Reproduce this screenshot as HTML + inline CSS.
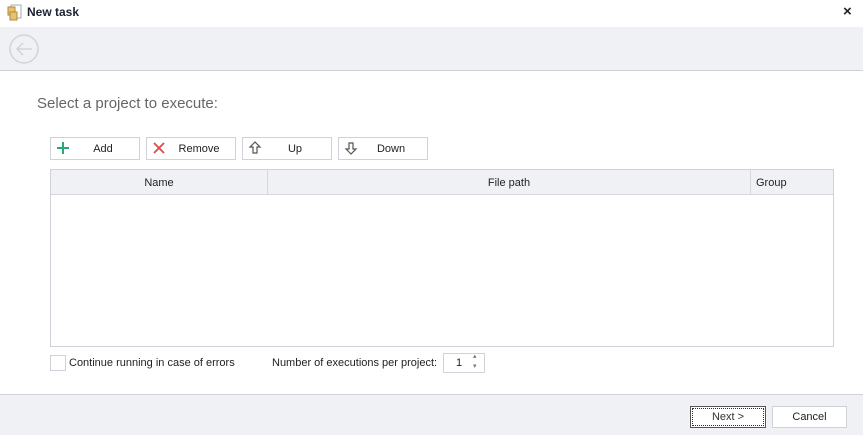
<!DOCTYPE html>
<html><head><style>
*{margin:0;padding:0;box-sizing:border-box}
body{width:863px;height:435px;position:relative;background:#fff;font-family:"Liberation Sans",sans-serif;font-size:11px;color:#222;overflow:hidden}
.a{position:absolute}
.btn{position:absolute;top:137px;width:90px;height:23px;border:1px solid #cfd2d8;background:#fff;text-align:center;line-height:23px;color:#222}
.btn span{position:absolute;left:0;right:0;top:0;padding-left:16px}
.ic{position:absolute;left:5px;top:3px}
</style></head><body>
<div class="a" style="left:0;top:0;width:863px;height:27px;background:#fff"></div>
<svg class="a" style="left:7px;top:4px" width="16" height="18" viewBox="0 0 16 18"><rect x="4" y="1" width="10" height="13" fill="#fff" stroke="#aaa"/><rect x="1" y="3" width="7" height="8" fill="#e8c070" stroke="#b08a3a"/><rect x="3" y="8" width="7" height="8" fill="#e8c070" stroke="#b08a3a"/></svg>
<div class="a" style="left:27px;top:5px;font-weight:bold;font-size:12px;color:#1a2233">New task</div>
<div class="a" style="left:843px;top:3px;font-size:15px;font-weight:bold;color:#222">×</div>
<div class="a" style="left:0;top:27px;width:863px;height:44px;background:#f0f1f5;border-bottom:1px solid #cfd1d6"></div>
<svg class="a" style="left:8px;top:33px" width="32" height="32" viewBox="0 0 32 32"><circle cx="16" cy="16" r="14" fill="none" stroke="#d2d4da" stroke-width="1.5"/><path d="M24 16H9M15 10l-6 6 6 6" fill="none" stroke="#d2d4da" stroke-width="1.5"/></svg>
<div class="a" style="left:37px;top:95px;font-size:15px;color:#666">Select a project to execute:</div>
<div class="btn" style="left:50px"><svg class="ic" width="14" height="14"><path d="M7 1v12M1 7h12" stroke="#2aa77a" stroke-width="2"/></svg><span>Add</span></div>
<div class="btn" style="left:146px"><svg class="ic" width="14" height="14"><path d="M2 2l10 10M12 2L2 12" stroke="#e04848" stroke-width="1.8"/></svg><span>Remove</span></div>
<div class="btn" style="left:242px"><svg class="ic" width="14" height="14"><path d="M7 1L2 6h3v6h4V6h3z" fill="none" stroke="#555" stroke-width="1.2"/></svg><span>Up</span></div>
<div class="btn" style="left:338px"><svg class="ic" width="14" height="14"><path d="M7 13L2 8h3V2h4v6h3z" fill="none" stroke="#555" stroke-width="1.2"/></svg><span>Down</span></div>
<div class="a" style="left:50px;top:169px;width:784px;height:178px;border:1px solid #cfd2d8"></div>
<div class="a" style="left:51px;top:170px;width:782px;height:25px;background:#f0f1f5;border-bottom:1px solid #d6d8de"></div>
<div class="a" style="left:267px;top:170px;width:1px;height:24px;background:#d6d8de"></div>
<div class="a" style="left:750px;top:170px;width:1px;height:24px;background:#d6d8de"></div>
<div class="a" style="left:51px;top:177px;width:216px;text-align:center">Name</div>
<div class="a" style="left:268px;top:177px;width:482px;text-align:center">File path</div>
<div class="a" style="left:756px;top:177px">Group</div>
<div class="a" style="left:50px;top:355px;width:16px;height:16px;border:1px solid #cfd2d8"></div>
<div class="a" style="left:69px;top:357px">Continue running in case of errors</div>
<div class="a" style="left:272px;top:357px">Number of executions per project:</div>
<div class="a" style="left:443px;top:353px;width:42px;height:20px;border:1px solid #cfd2d8"></div>
<div class="a" style="left:456px;top:357px">1</div>
<div class="a" style="left:473px;top:352px;font-size:7px;color:#777">▴</div>
<div class="a" style="left:473px;top:362px;font-size:7px;color:#777">▾</div>
<div class="a" style="left:0;top:394px;width:863px;height:41px;background:#f0f1f5;border-top:1px solid #cfd1d6"></div>
<div class="a" style="left:690px;top:406px;width:76px;height:22px;border:1px solid #555;background:#fff;text-align:center;line-height:21px;outline:1px dotted #333;outline-offset:-3px;color:#333">Next &gt;</div>
<div class="a" style="left:772px;top:406px;width:75px;height:22px;border:1px solid #cfd2d8;background:#fff;text-align:center;line-height:21px">Cancel</div>
</body></html>
